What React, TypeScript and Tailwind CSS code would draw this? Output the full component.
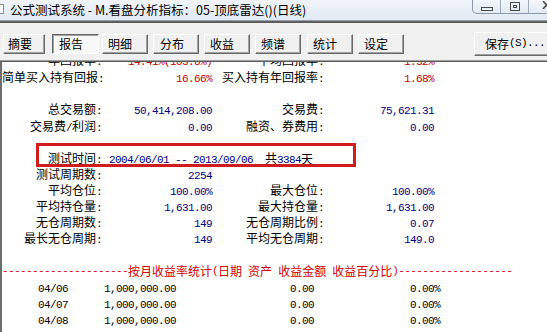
import React from "react";

const MONO = "font-['Liberation_Mono',monospace] text-[11px] tracking-[-0.6px] whitespace-pre";
const CJK = "font-['Noto_Sans_CJK_SC',sans-serif] text-[12px] whitespace-pre";

function T({ s }: { s: string }) {
  const parts = s.split(/([\x00-\x7F]+)/).filter((p) => p.length > 0);
  return (
    <>
      {parts.map((p, i) =>
        /^[\x00-\x7F]+$/.test(p) ? (
          <span key={i} className={MONO}>
            {p}
          </span>
        ) : (
          <span key={i} className={CJK}>
            {p}
          </span>
        )
      )}
    </>
  );
}

type Row = { l1: string; v1: string; r1?: boolean; l2?: string; v2?: string; r2?: boolean };

function StatRow({ r, up }: { r: Row; up?: boolean }) {
  return (
    <div className={"flex h-[16.13px] items-center leading-[16px] " + (up ? "pb-[3px]" : "")}>
      <div className="w-[100px] shrink-0 text-right text-black">
        <T s={r.l1} />
      </div>
      <div className={"w-[110px] shrink-0 text-right " + (r.r1 ? "text-[#c00000]" : "text-[#000080]")}>
        <T s={r.v1} />
      </div>
      <div className="w-[112px] shrink-0 text-right text-black">{r.l2 ? <T s={r.l2} /> : null}</div>
      <div className={"w-[110px] shrink-0 text-right " + (r.r2 ? "text-[#c00000]" : "text-[#000080]")}>
        {r.v2 ? <T s={r.v2} /> : null}
      </div>
    </div>
  );
}

function Blank() {
  return <div className="h-[16.13px]" />;
}

function MonthRow({ d }: { d: string }) {
  return (
    <div className="flex h-[16.13px] items-center leading-[16px] text-black">
      <div className="w-[102px] shrink-0 pl-[36px]">
        <T s={d} />
      </div>
      <div className="w-[186px] shrink-0">
        <T s="1,000,000.00" />
      </div>
      <div className="w-[120px] shrink-0">
        <T s="0.00" />
      </div>
      <div>
        <T s="0.00%" />
      </div>
    </div>
  );
}

function Btn({ label, pressed, w, ml, pl }: { label: string; pressed?: boolean; w: string; ml: string; pl: string }) {
  const base = "h-[20px] shrink-0 flex items-center border leading-none text-black " + w + " " + ml + " " + pl;
  const cls = pressed
    ? base + " border-t-[#696969] border-l-[#696969] border-r-white border-b-white shadow-[inset_1px_1px_0_#a0a0a0] bg-[#f8f8f8]"
    : base + " border-t-white border-l-white border-r-[#696969] border-b-[#696969] shadow-[inset_-1px_-1px_0_#a0a0a0] bg-[#f0f0f0]";
  return (
    <div className={cls}>
      <T s={label} />
    </div>
  );
}

export default function App() {
  const top: Row[] = [
    { l1: "年回报率:", v1: "14.41%(103.6%)", r1: true, l2: "平均回报率:", v2: "1.52%", r2: true },
    { l1: "简单买入持有回报:", v1: "16.66%", r1: true, l2: "买入持有年回报率:", v2: "1.68%", r2: true },
  ];
  const mid: Row[] = [
    { l1: "总交易额:", v1: "50,414,208.00", l2: "交易费:", v2: "75,621.31" },
    { l1: "交易费/利润:", v1: "0.00", l2: "融资、券费用:", v2: "0.00" },
  ];
  const low: Row[] = [
    { l1: "测试周期数:", v1: "2254" },
    { l1: "平均仓位:", v1: "100.00%", l2: "最大仓位:", v2: "100.00%" },
    { l1: "平均持仓量:", v1: "1,631.00", l2: "最大持仓量:", v2: "1,631.00" },
    { l1: "无仓周期数:", v1: "149", l2: "无仓周期比例:", v2: "0.07" },
    { l1: "最长无仓周期:", v1: "149", l2: "平均无仓周期:", v2: "149.0" },
  ];

  return (
    <div className="relative w-[547px] h-[332px] overflow-hidden bg-[#f0f0f0] flex flex-col">
      {/* Title bar */}
      <div className="h-[20px] shrink-0 flex items-start bg-gradient-to-b from-[#f1f5fa] to-[#e0e9f3]">
        <div className="mt-[4px] w-[4px] h-[10px] border border-l-0 border-[#8a8a8a] bg-white shrink-0" />
        <div className="w-[468px] shrink-0 pl-[6px] h-[20px] flex items-center text-[12.5px] text-black font-['Noto_Sans_CJK_SC',sans-serif] whitespace-pre">
          公式测试系统 - M.看盘分析指标：05-顶底雷达()(日线)
        </div>
        <div className="shrink-0 h-[14px] flex border border-t-0 border-[#8b9aab] rounded-bl-[5px] bg-gradient-to-b from-[#f4f7fb] to-[#e2eaf3]">
          <div className="w-[27px] flex items-center justify-center">
            <div className="mt-[5px] w-[12px] h-[4px] border border-[#4a4a4a]" />
          </div>
          <div className="w-px bg-[#9aa8b8]" />
          <div className="w-[27px] flex items-start justify-center pt-[2px]">
            <div className="w-[10px] h-[9px] border border-[#4a4a4a] flex items-center justify-center">
              <div className="w-[4px] h-[3px] border border-[#4a4a4a]" />
            </div>
          </div>
          <div className="w-px bg-[#9aa8b8]" />
          <div className="w-[44px] relative">
            <svg className="absolute left-[13px] top-[1px]" width="9" height="8" viewBox="0 0 9 8">
              <path d="M1 0 L8 8 M8 0 L1 8" stroke="#4a4a4a" strokeWidth="1.6" />
            </svg>
          </div>
        </div>
      </div>
      <div className="h-px shrink-0 bg-[#9aa3ad]" />
      <div className="h-[2px] shrink-0 bg-[#5e5e5e]" />

      {/* Toolbar */}
      <div className="h-[37px] shrink-0 flex items-center pt-[7px] pb-[3px] bg-[#f0f0f0]">
        <Btn label="摘要" w="w-[42px]" ml="ml-[3px]" pl="pl-[4px]" />
        <Btn label="报告" pressed w="w-[47px]" ml="ml-[7px]" pl="pl-[6px]" />
        <Btn label="明细" w="w-[46px]" ml="ml-[3px]" pl="pl-[5px]" />
        <Btn label="分布" w="w-[46px]" ml="ml-[5px]" pl="pl-[6px]" />
        <Btn label="收益" w="w-[46px]" ml="ml-[5px]" pl="pl-[5px]" />
        <Btn label="频谱" w="w-[46px]" ml="ml-[5px]" pl="pl-[5px]" />
        <Btn label="统计" w="w-[46px]" ml="ml-[6px]" pl="pl-[5px]" />
        <Btn label="设定" w="w-[46px]" ml="ml-[5px]" pl="pl-[5px]" />
        <div className="ml-[70px] h-[24px] w-[78px] shrink-0 flex items-center pl-[10px] border border-t-white border-l-white border-r-[#696969] border-b-[#696969] shadow-[inset_-1px_-1px_0_#a0a0a0] text-black leading-none">
          <T s="保存(S)..." />
        </div>
      </div>
      <div className="h-px shrink-0 bg-[#a0a0a0]" />
      <div className="h-px shrink-0 bg-[#5a5a5a]" />

      {/* Content */}
      <div className="flex-1 bg-white border-l-2 border-[#6e6e6e] overflow-hidden">
        <div className="-mt-[8.5px]">
          <StatRow r={top[0]} up />
          <StatRow r={top[1]} />
          <Blank />
          {mid.map((r, i) => (
            <StatRow key={"m" + i} r={r} />
          ))}
          <Blank />
          <div className="flex h-[16.13px] items-center leading-[16px]">
            <div className="w-[100px] shrink-0 text-right text-black">
              <T s="测试时间:" />
            </div>
            <div className="pl-px text-[#000080]">
              <T s=" 2004/06/01 -- 2013/09/06" />
            </div>
            <div className="text-black">
              <T s="  共" />
            </div>
            <div className="text-[#000080]">
              <T s="3384" />
            </div>
            <div className="text-black">
              <T s="天" />
            </div>
          </div>
          {low.map((r, i) => (
            <StatRow key={"l" + i} r={r} />
          ))}
          <Blank />
          <div className="flex h-[16.13px] items-center leading-[16px] text-[#d00000]">
            <T s="---------------------按月收益率统计(日期 资产 收益金额 收益百分比)-------------------" />
          </div>
          <MonthRow d="04/06" />
          <MonthRow d="04/07" />
          <MonthRow d="04/08" />
          <MonthRow d="04/09" />
        </div>
      </div>

      {/* Red annotation box */}
      <div className="absolute left-[36px] top-[143px] w-[320px] h-[24px] border-[3px] border-[#d01c1c]" />
    </div>
  );
}
